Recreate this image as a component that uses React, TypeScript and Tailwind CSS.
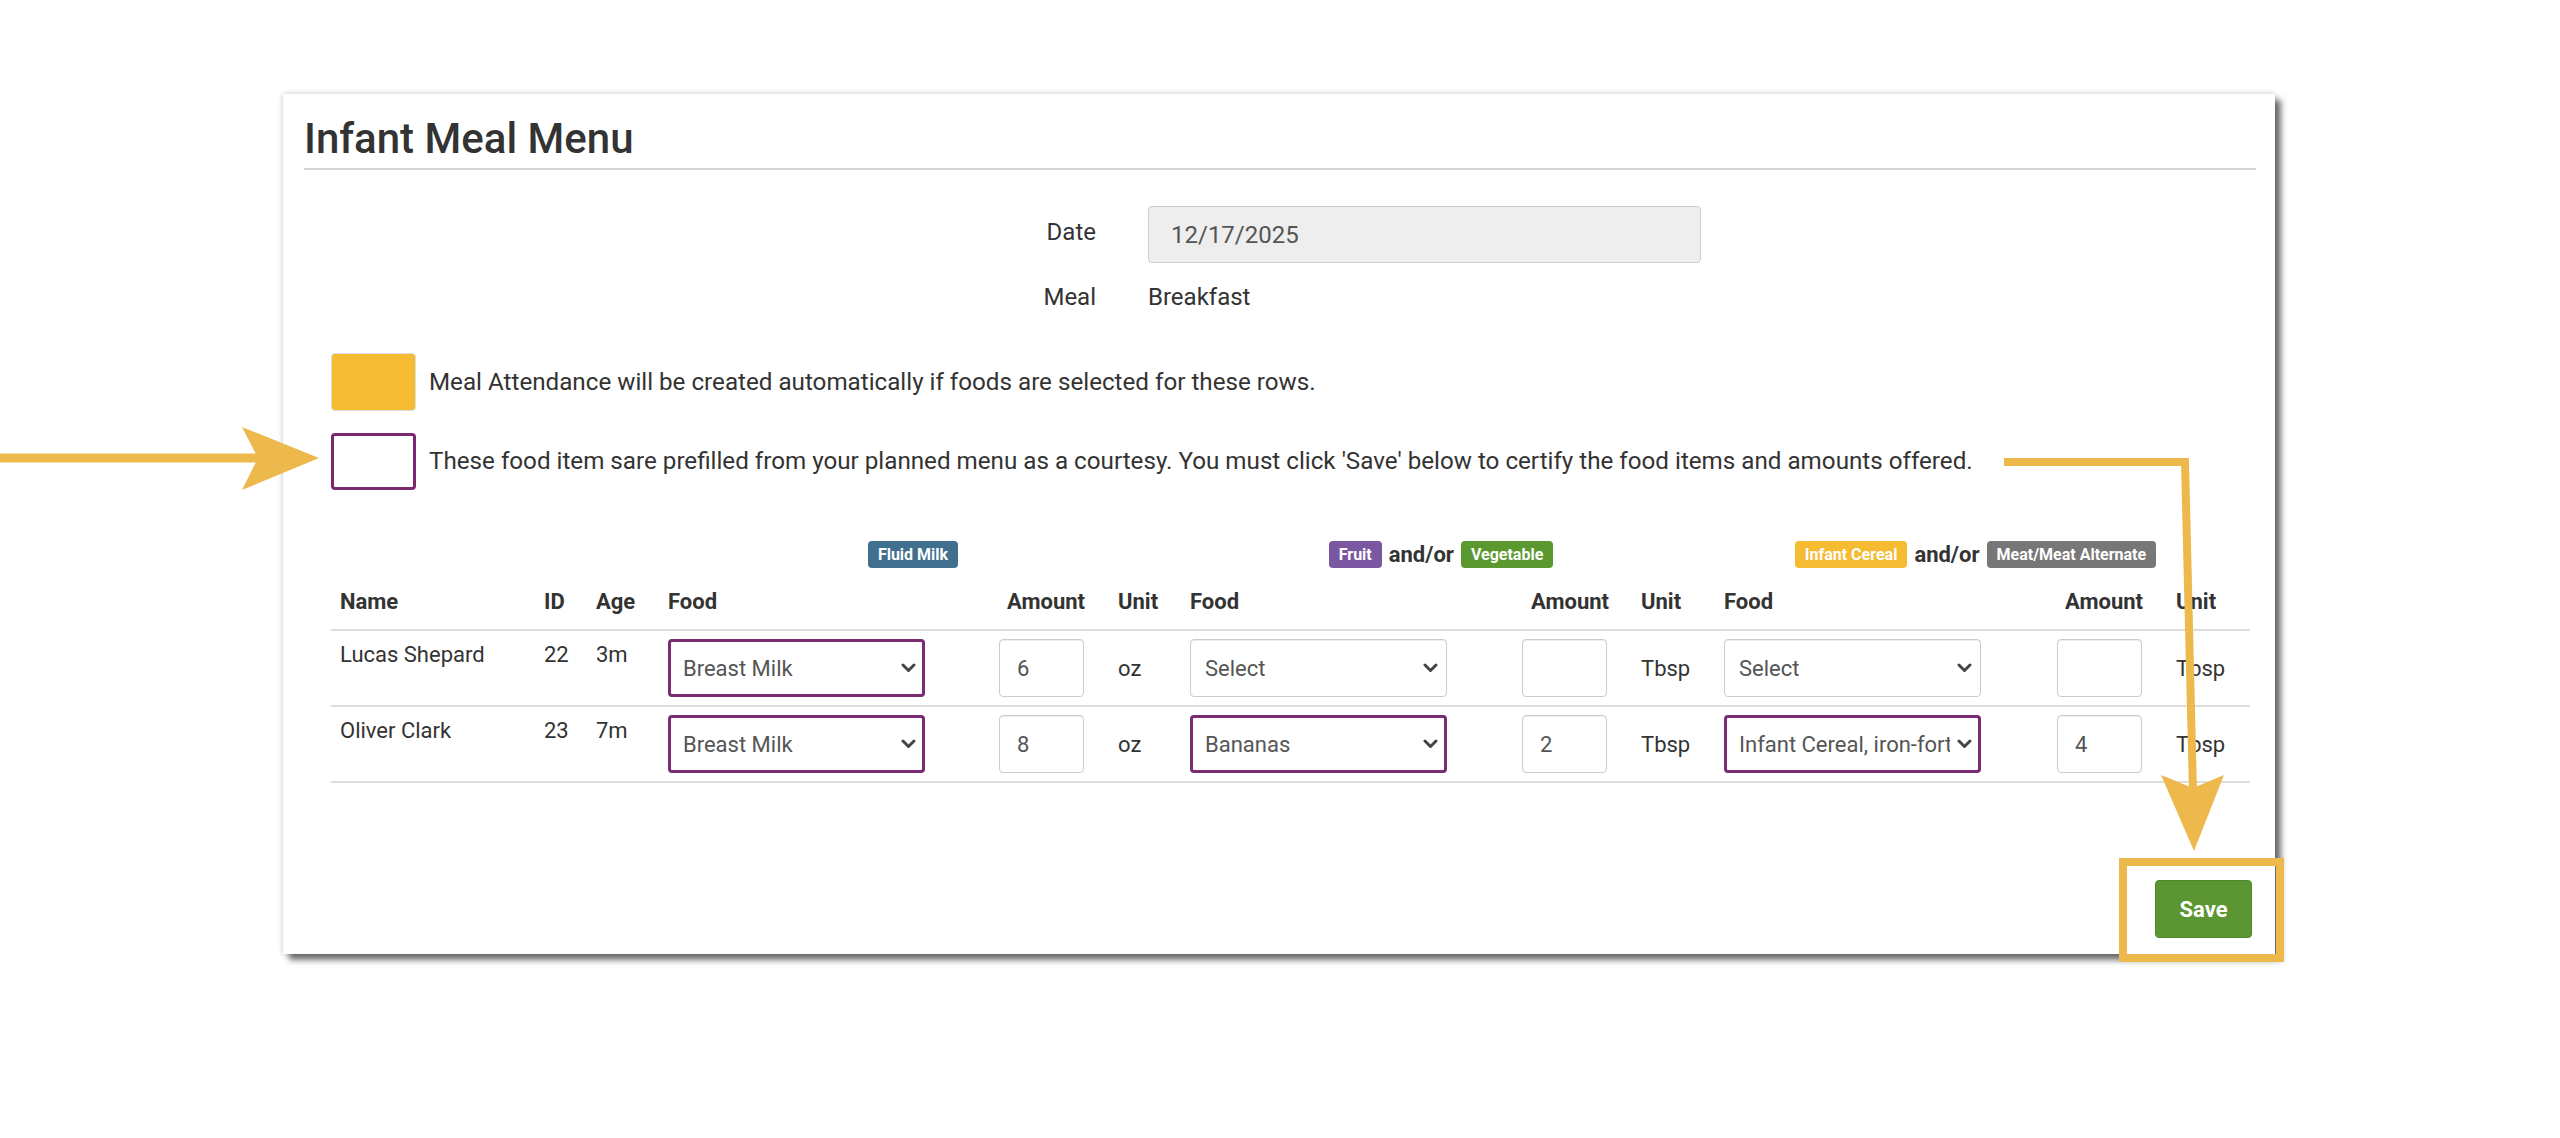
import React from "react";

const COLS =
  "grid w-[1919px] grid-cols-[204px_52px_72px_331px_119px_72px_332px_119px_83px_333px_119px_83px]";

type Row = {
  name: string;
  id: string;
  age: string;
  milk: string;
  milkAmt: string;
  fruit: string;
  fruitAmt: string;
  cereal: string;
  cerealAmt: string;
};

const rows: Row[] = [
  {
    name: "Lucas Shepard",
    id: "22",
    age: "3m",
    milk: "Breast Milk",
    milkAmt: "6",
    fruit: "",
    fruitAmt: "",
    cereal: "",
    cerealAmt: "",
  },
  {
    name: "Oliver Clark",
    id: "23",
    age: "7m",
    milk: "Breast Milk",
    milkAmt: "8",
    fruit: "Bananas",
    fruitAmt: "2",
    cereal: "Infant Cereal, iron-fortified",
    cerealAmt: "4",
  },
];

function Chevron() {
  return (
    <svg width="15" height="10" viewBox="0 0 15 10" className="ml-auto shrink-0">
      <polyline
        points="2,2 7.5,7.5 13,2"
        fill="none"
        stroke="#444"
        strokeWidth="3"
        strokeLinecap="round"
        strokeLinejoin="round"
      />
    </svg>
  );
}

function FoodSelect({ value }: { value: string }) {
  const prefilled = value !== "";
  return (
    <div
      className={
        prefilled
          ? "flex h-[58px] w-[257px] items-center rounded-[4px] border-[3px] border-[#7b2a74] bg-white pl-[12px] pr-[6px]"
          : "flex h-[58px] w-[257px] items-center rounded-[4px] border border-[#ccc] bg-white pl-[14px] pr-[8px] shadow-[inset_0_1px_1px_rgba(0,0,0,0.075)]"
      }
    >
      <span className="block max-w-[211px] overflow-hidden whitespace-nowrap text-[22px] text-[#555]">
        {prefilled ? value : "Select"}
      </span>
      <Chevron />
    </div>
  );
}

function AmountInput({ value }: { value: string }) {
  return (
    <input
      readOnly
      defaultValue={value}
      className="h-[58px] w-[85px] rounded-[4px] border border-[#ccc] bg-white pl-[17px] text-[22px] text-[#555] shadow-[inset_0_1px_1px_rgba(0,0,0,0.075)] outline-none"
    />
  );
}

function Badge({ children, color }: { children: React.ReactNode; color: string }) {
  return (
    <span
      className={`inline-flex h-[27px] items-center rounded-[4px] px-[10px] text-[16px] font-bold leading-none text-white ${color}`}
    >
      {children}
    </span>
  );
}

export default function App() {
  return (
    <div className="relative h-[1138px] w-[2560px] overflow-hidden bg-white pl-[283px] pt-[94px] font-['Roboto','Liberation_Sans',sans-serif] text-[#333]">
      <div className="h-[860px] w-[1992px] bg-white pl-[21px] pr-[19px] pt-[20px] shadow-[6px_6px_6px_rgba(0,0,0,0.55),0_0_6px_rgba(0,0,0,0.22)]">
        <h1 className="border-b-2 border-[#d6d6d6] pb-[4px] text-[42px] font-medium leading-[50px] text-[#333]">
          Infant Meal Menu
        </h1>

        {/* date + meal */}
        <div className="mt-[36px] flex items-start">
          <label className="w-[792px] pt-[11px] text-right text-[24px] leading-[31px]">Date</label>
          <div className="ml-[52px] flex h-[57px] w-[553px] items-center rounded-[4px] border border-[#ccc] bg-[#eee] pl-[22px] text-[24px] text-[#555]">
            12/17/2025
          </div>
        </div>
        <div className="mt-[14px] flex h-[40px] items-center text-[24px]">
          <span className="w-[792px] text-right">Meal</span>
          <span className="ml-[52px]">Breakfast</span>
        </div>

        {/* legend */}
        <div className="ml-[27px] mt-[36px] flex items-center gap-[13px] text-[24.2px]">
          <div className="h-[58px] w-[85px] rounded-[4px] border border-[#ddd] bg-[#f4bb33]" />
          <span>Meal Attendance will be created automatically if foods are selected for these rows.</span>
        </div>
        <div className="ml-[27px] mt-[22px] flex items-center gap-[13px] text-[24.2px]">
          <div className="h-[57px] w-[85px] rounded-[4px] border-[3px] border-[#7a2870] bg-white" />
          <span>
            These food item sare prefilled from your planned menu as a courtesy. You must click 'Save' below to
            certify the food items and amounts offered.
          </span>
        </div>

        {/* meal table */}
        <div className="ml-[27px] mt-[51px]">
          <div className={`${COLS} h-[27px]`}>
            <div className="col-span-3 col-start-4 flex justify-center pr-[14px]">
              <Badge color="bg-[#41708f]">Fluid Milk</Badge>
            </div>
            <div className="col-span-3 col-start-7 flex items-center justify-center gap-[7px] pr-[14px]">
              <Badge color="bg-[#7b57a1]">Fruit</Badge>
              <span className="text-[22px] font-bold leading-none">and/or</span>
              <Badge color="bg-[#5b982f]">Vegetable</Badge>
            </div>
            <div className="col-span-3 col-start-10 flex items-center justify-center gap-[7px] pr-[14px]">
              <Badge color="bg-[#f4bb33]">Infant Cereal</Badge>
              <span className="text-[22px] font-bold leading-none">and/or</span>
              <Badge color="bg-[#777]">Meat/Meat Alternate</Badge>
            </div>
          </div>

          <div className={`${COLS} h-[63px] items-end border-b-2 border-[#ddd] pb-[12px] text-[22px] font-bold leading-[31px]`}>
            <div className="pl-[9px]">Name</div>
            <div className="pl-[9px]">ID</div>
            <div className="pl-[9px]">Age</div>
            <div className="pl-[9px]">Food</div>
            <div className="pl-[17px]">Amount</div>
            <div className="pl-[9px]">Unit</div>
            <div className="pl-[9px]">Food</div>
            <div className="pl-[18px]">Amount</div>
            <div className="pl-[9px]">Unit</div>
            <div className="pl-[9px]">Food</div>
            <div className="pl-[17px]">Amount</div>
            <div className="pl-[9px]">Unit</div>
          </div>

          {rows.map((r) => (
            <div key={r.id} className={`${COLS} h-[76px] border-b-2 border-[#ddd] text-[22px] leading-[31px]`}>
              <div className="pl-[9px] pt-[8px]">{r.name}</div>
              <div className="pl-[9px] pt-[8px]">{r.id}</div>
              <div className="pl-[9px] pt-[8px]">{r.age}</div>
              <div className="self-center pl-[9px]">
                <FoodSelect value={r.milk} />
              </div>
              <div className="self-center pl-[9px]">
                <AmountInput value={r.milkAmt} />
              </div>
              <div className="self-center pl-[9px]">oz</div>
              <div className="self-center pl-[9px]">
                <FoodSelect value={r.fruit} />
              </div>
              <div className="self-center pl-[9px]">
                <AmountInput value={r.fruitAmt} />
              </div>
              <div className="self-center pl-[9px]">Tbsp</div>
              <div className="self-center pl-[9px]">
                <FoodSelect value={r.cereal} />
              </div>
              <div className="self-center pl-[9px]">
                <AmountInput value={r.cerealAmt} />
              </div>
              <div className="self-center pl-[9px]">Tbsp</div>
            </div>
          ))}
        </div>

        <div className="mt-[97px] flex justify-end pr-[4px]">
          <button className="h-[58px] w-[97px] rounded-[4px] border border-[#4e8a2a] bg-[#5b9632] text-[22px] font-bold text-white">
            Save
          </button>
        </div>
      </div>

      {/* callout arrows */}
      <svg
        className="pointer-events-none absolute left-0 top-0"
        width="2560"
        height="1138"
        viewBox="0 0 2560 1138"
      >
        <line x1="0" y1="458" x2="262" y2="458" stroke="#edb94d" strokeWidth="9" />
        <polygon points="242,427 319,458 242,490 258,458" fill="#edb94d" />
        <polyline
          points="2004,462 2185,462 2193,792"
          fill="none"
          stroke="#edb94d"
          strokeWidth="8"
          strokeLinejoin="miter"
        />
        <polygon points="2161,775 2193,788 2224,775 2194,851" fill="#edb94d" />
      </svg>
      <div className="pointer-events-none absolute left-[2119px] top-[858px] h-[104px] w-[165px] border-[8px] border-[#edb94d]" />
    </div>
  );
}
